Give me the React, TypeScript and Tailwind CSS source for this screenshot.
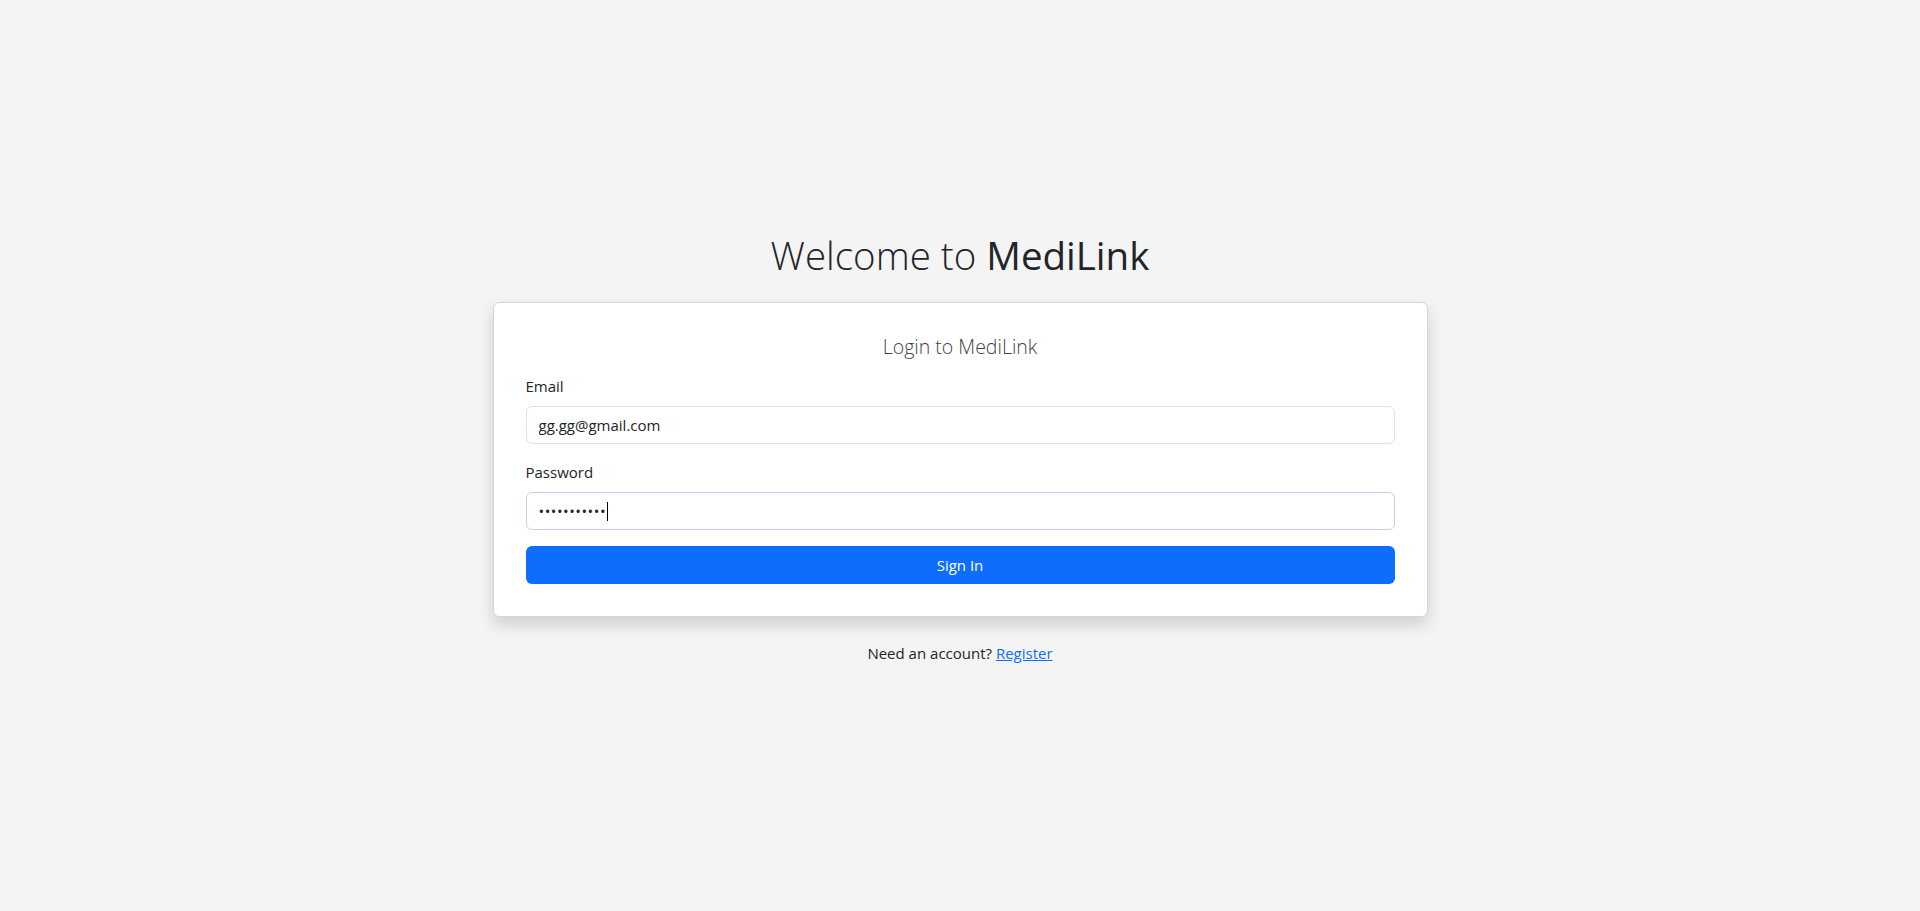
import { useState } from "react";

export default function App() {
  const [email, setEmail] = useState("gg.gg@gmail.com");

  return (
    <div className="min-h-screen bg-[#f4f4f4] flex flex-col items-center justify-center pb-[14px] font-['Open_Sans',sans-serif] text-[#212529]">
      <h1 className="text-[38.5px] leading-[1.2] font-light mb-6">
        Welcome to <span className="font-normal">MediLink</span>
      </h1>

      <div className="w-[935px] bg-white border border-[#d6d6d6] rounded-md shadow-[0_8px_16px_rgba(0,0,0,0.15)] p-8">
        <h2 className="text-center text-[19.5px] leading-[1.2] font-light text-[#444] mb-4">
          Login to MediLink
        </h2>

        <form onSubmit={(e) => e.preventDefault()}>
          <div className="mb-4">
            <label className="block text-[15px] leading-6 mb-2">Email</label>
            <input
              type="email"
              value={email}
              onChange={(e) => setEmail(e.target.value)}
              className="w-full h-[38px] px-3 text-[15px] text-[#212529] border border-[#dee2e6] rounded-md outline-none"
            />
          </div>

          <div className="mb-4">
            <label className="block text-[15px] leading-6 mb-2">Password</label>
            {/* focused field, drawn with its caret */}
            <div className="w-full h-[38px] px-3 flex items-center border border-[#c3d3ee] rounded-md">
              <span className="text-[15px] tracking-[0.5px] text-[#212529]">
                •••••••••••
              </span>
              <span className="w-px h-[19px] bg-black ml-px" />
            </div>
          </div>

          <button
            type="submit"
            className="w-full h-[38px] bg-[#0d6efd] text-white text-[15px] rounded-md"
          >
            Sign In
          </button>
        </form>
      </div>

      <p className="mt-6 text-[15px] leading-6">
        Need an account?{" "}
        <a href="#" className="text-[#0d6efd] underline">
          Register
        </a>
      </p>
    </div>
  );
}
